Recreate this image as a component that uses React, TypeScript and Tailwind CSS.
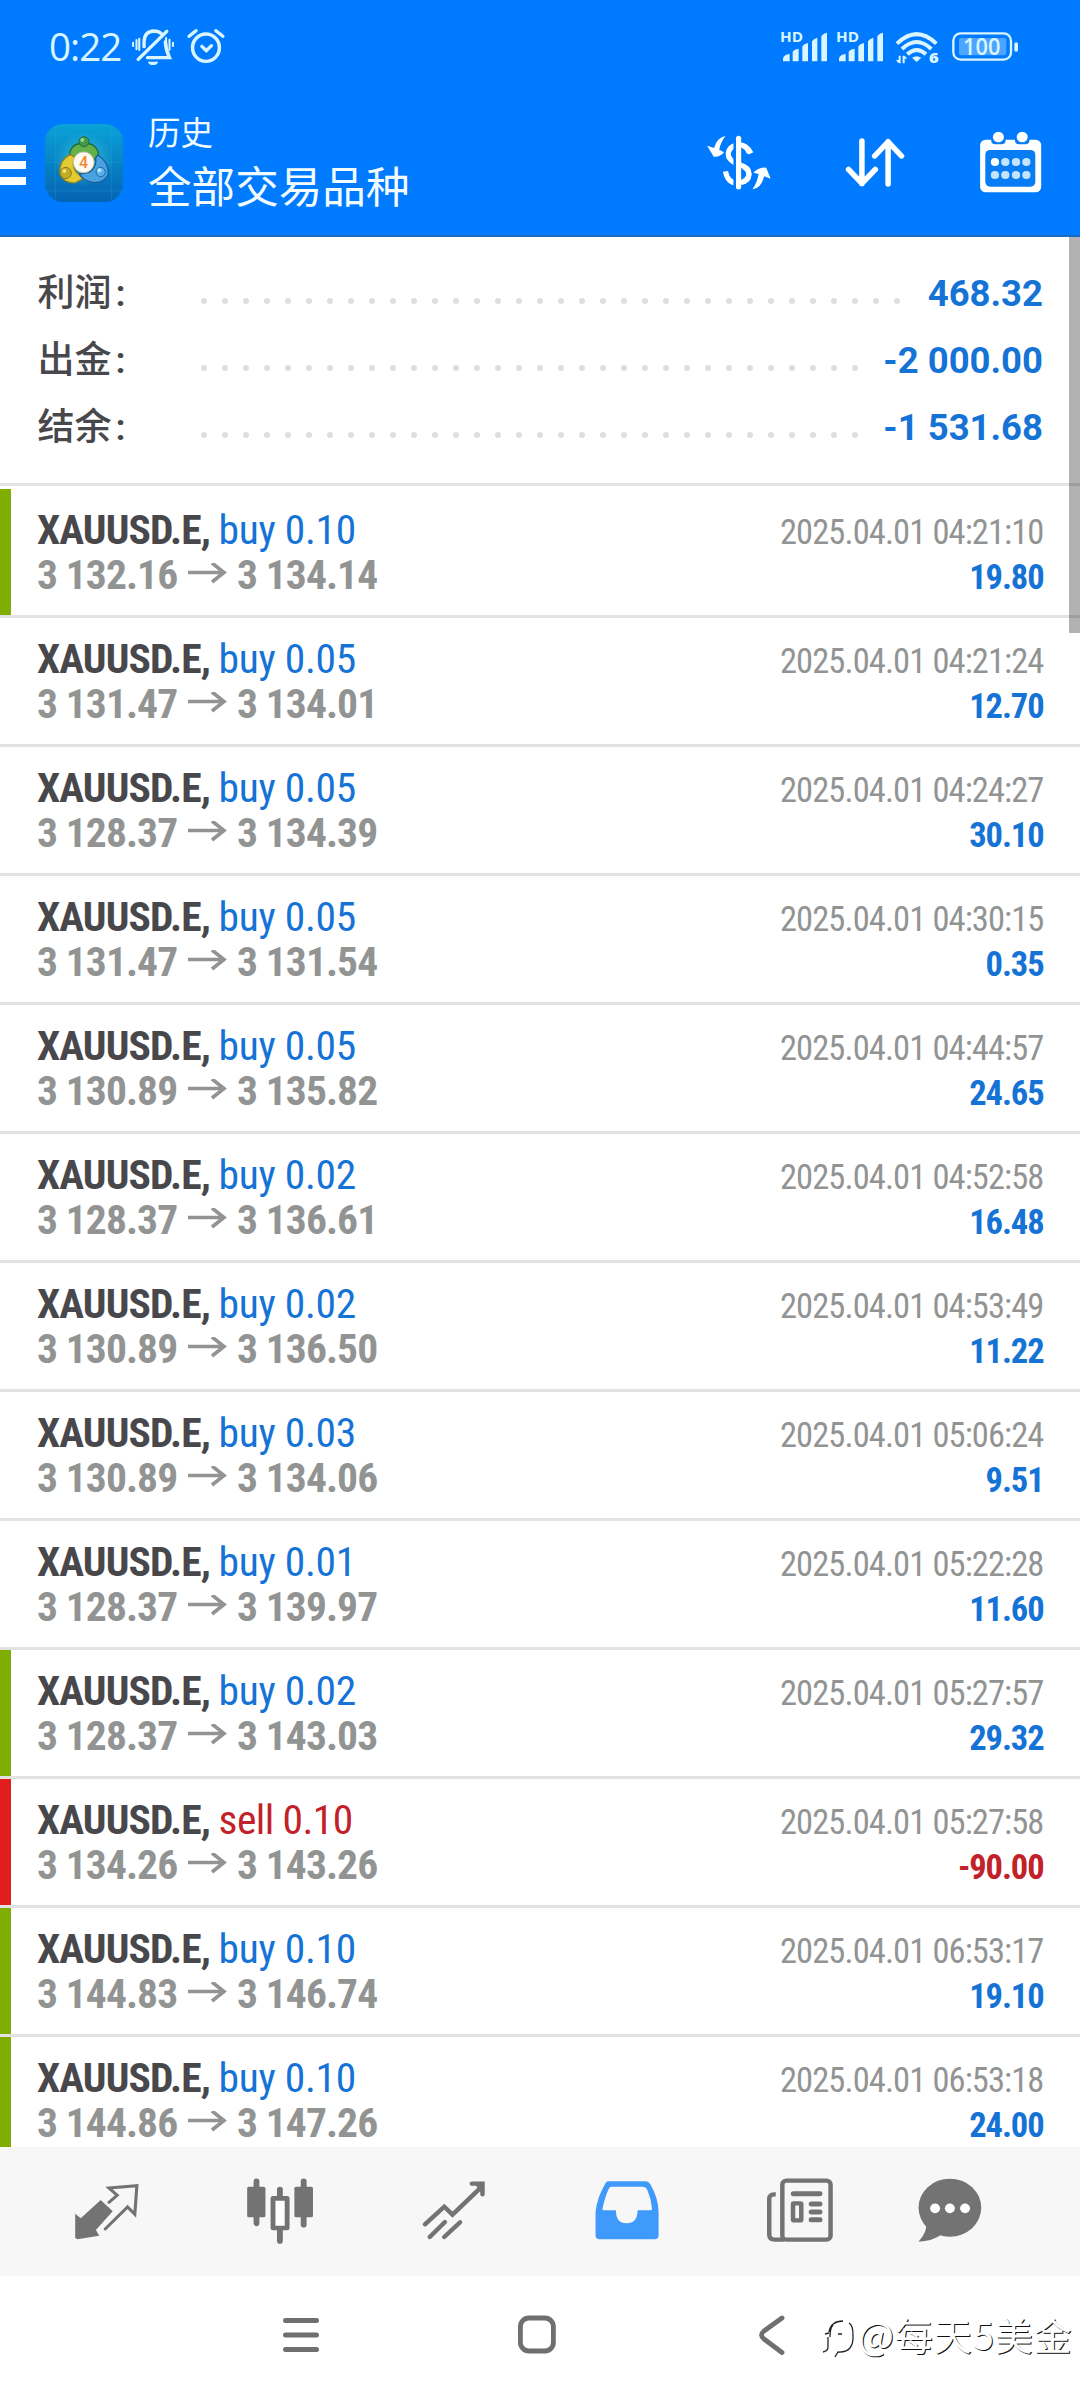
import type { ReactNode } from "react";

type Marker = "green" | "red" | "none";

interface Trade {
  side: "buy" | "sell";
  volume: string;
  open: string;
  close: string;
  time: string;
  profit: string;
  marker: Marker;
}

const trade = (
  side: "buy" | "sell",
  volume: string,
  open: string,
  close: string,
  time: string,
  profit: string,
  marker: Marker = "none",
): Trade => ({ side, volume, open, close, time, profit, marker });

const TRADES: Trade[] = [
  trade("buy", "0.10", "3 132.16", "3 134.14", "04:21:10", "19.80", "green"),
  trade("buy", "0.05", "3 131.47", "3 134.01", "04:21:24", "12.70"),
  trade("buy", "0.05", "3 128.37", "3 134.39", "04:24:27", "30.10"),
  trade("buy", "0.05", "3 131.47", "3 131.54", "04:30:15", "0.35"),
  trade("buy", "0.05", "3 130.89", "3 135.82", "04:44:57", "24.65"),
  trade("buy", "0.02", "3 128.37", "3 136.61", "04:52:58", "16.48"),
  trade("buy", "0.02", "3 130.89", "3 136.50", "04:53:49", "11.22"),
  trade("buy", "0.03", "3 130.89", "3 134.06", "05:06:24", "9.51"),
  trade("buy", "0.01", "3 128.37", "3 139.97", "05:22:28", "11.60"),
  trade("buy", "0.02", "3 128.37", "3 143.03", "05:27:57", "29.32", "green"),
  trade("sell", "0.10", "3 134.26", "3 143.26", "05:27:58", "-90.00", "red"),
  trade("buy", "0.10", "3 144.83", "3 146.74", "06:53:17", "19.10", "green"),
  trade("buy", "0.10", "3 144.86", "3 147.26", "06:53:18", "24.00", "green"),
];

const MARKER_CLASS: Record<Marker, string> = {
  green: "bg-[#80ae00]",
  red: "bg-[#e11d1d]",
  none: "bg-transparent",
};

function SignalGroup({ x }: { x: number }) {
  return (
    <g transform={`translate(${x} 0)`}>
      <text x="60" y="67" fontSize="41" fontWeight="700" fontFamily="Open Sans, sans-serif" textLength="69" lengthAdjust="spacingAndGlyphs">
        HD
      </text>
      <path d="M69 124v-8q2-12 20-14v22zM98 124V95q4-7 18-9v38zM127 124V79q4-7 17-10v55zM156 124V64q4-8 16-11v71zM184 124V49q4-8 17-11v86z" />
    </g>
  );
}

function StatusBar() {
  return (
    <div className="flex h-[94px] items-start pt-5 pl-[49px] text-[#d9f5ff]">
      <div className="w-[78px] font-['Open_Sans'] text-[38.5px] leading-[52px] tracking-[-1px] font-medium">
        <span>0:22</span>
      </div>
      <svg className="mt-[6px] ml-1 h-[42px] w-[44px]" viewBox="378 78 128 126" preserveAspectRatio="none" fill="none" stroke="currentColor" strokeLinecap="round">
        <path strokeWidth="10" d="M399 178 482 94M416 140v-16q2-30 28-31 14 0 22 8M478 125q1 25 12 48H426" />
        <path strokeWidth="6" d="M384 128v10M394 120v28M402 116v34M480 114v36M490 119v30M500 128v10" />
        <path fill="currentColor" stroke="none" d="M427 185h30q-3 10-15 10t-15-10z" />
      </svg>
      <svg className="mt-[6px] ml-[11px] h-[42px] w-[42px]" viewBox="540 78 122 126" preserveAspectRatio="none" fill="none" stroke="currentColor" strokeWidth="10" strokeLinecap="round">
        <ellipse cx="598" cy="143" rx="39" ry="41" />
        <path d="m549 109 20-17M647 109l-20-17" />
        <path d="m586 139 13 13 15-15" />
      </svg>
      <svg className="ml-auto h-[60px] w-[320px]" viewBox="0 0 960 180" fill="currentColor">
        <SignalGroup x={0} />
        <SignalGroup x={168} />
        <g fill="none" stroke="currentColor" strokeWidth="12">
          <path d="M411 71q59-57 118 0M426 87q44-42 88 0M442 103q28-26 56 0" />
        </g>
        <path d="M456 113q14-9 28 0l-14 13z" />
        <path d="M416 107h6v23h-4q-7-3-10-10h8zM428 130v-23h4q6 2 9 9h-7v14z" />
        <text x="507" y="130" fontSize="41" fontWeight="800" fontFamily="Open Sans, sans-serif" textLength="29" lengthAdjust="spacingAndGlyphs">
          6
        </text>
        <rect x="580" y="40" width="173" height="79" rx="22" fill="none" stroke="currentColor" strokeWidth="7" />
        <rect x="597" y="54" width="142" height="52" rx="6" opacity="0.35" />
        <text x="609" y="105" fontSize="68" fontWeight="600" fontFamily="Open Sans, sans-serif" textLength="112" lengthAdjust="spacingAndGlyphs">
          100
        </text>
        <rect x="763" y="67" width="11" height="28" rx="5" />
      </svg>
    </div>
  );
}

function AppLogo() {
  return (
    <svg className="h-[80px] w-[80px]" viewBox="42 40 240 240">
      <defs>
        <linearGradient id="tile" x1="0" y1="0" x2="0" y2="1">
          <stop offset="0" stopColor="#0aa2d8" />
          <stop offset="0.5" stopColor="#0783c4" />
          <stop offset="1" stopColor="#0563b4" />
        </linearGradient>
        <radialGradient id="glow">
          <stop offset="0" stopColor="#5fe0d8" stopOpacity="0.6" />
          <stop offset="1" stopColor="#5fe0d8" stopOpacity="0" />
        </radialGradient>
      </defs>
      <rect x="45" y="43" width="234" height="234" rx="54" fill="url(#tile)" />
      <path d="M46 75h232M46 159h232M46 244h232M76 50v220M244 50v220" stroke="#35b4e0" strokeOpacity="0.35" strokeWidth="2" />
      <ellipse cx="162" cy="150" rx="90" ry="80" fill="url(#glow)" />
      <g strokeWidth="4">
        <path d="M120 150q-8-48 42-50 48 2 44 50l-22-4q-20-28-44-2z" fill="#64b04a" stroke="#1f6d3a" />
        <path d="M122 135q-34 14-33 56 12 32 48 28l22-12-20-20q-16-22-4-44z" fill="#e4cb33" stroke="#8f8420" />
        <path d="M203 136q34 20 32 58-10 26-44 25-32-4-42-26l30-6q22-16 18-42z" fill="#4aa3df" stroke="#155f9c" />
      </g>
      <circle cx="162" cy="96" r="15" fill="#3f9a48" stroke="#216b39" strokeWidth="3" />
      <circle cx="107" cy="190" r="17" fill="#c2ad25" stroke="#817a23" strokeWidth="3" />
      <circle cx="212" cy="187" r="14" fill="#59b2ed" stroke="#1c6bab" strokeWidth="3" />
      <circle cx="157" cy="91" r="6" fill="#9ad58c" />
      <circle cx="103" cy="184" r="6" fill="#f2e574" />
      <circle cx="208" cy="182" r="6" fill="#bfe6ff" />
      <circle cx="161" cy="158" r="31" fill="#fffaf0" stroke="#c9cdb4" strokeWidth="3" />
      <text x="161" y="175" fontSize="48" fontWeight="500" fontFamily="Roboto, sans-serif" textAnchor="middle" fill="#ee8a3c">
        4
      </text>
    </svg>
  );
}

function Header() {
  return (
    <header className="h-[237px] border-b-2 border-[#1769c4] bg-[#007aff]">
      <StatusBar />
      <div className="flex h-[141px] items-start text-white">
        <div className="mt-[51px] flex w-[26px] flex-col gap-[8.5px]">
          <span className="h-[7.5px] bg-white" />
          <span className="h-[7.5px] bg-white" />
          <span className="h-[7.5px] bg-white" />
        </div>
        <div className="mt-[29px] ml-[18px]">
          <AppLogo />
        </div>
        <div className="mt-[15px] ml-6 flex flex-col font-['Noto_Sans_CJK_SC'] text-[#f2fcff]">
          <span className="text-[32.5px] leading-[44px]">历史</span>
          <span className="text-[43.6px] leading-[62px]">全部交易品种</span>
        </div>
        <div className="mt-[35px] mr-[34px] ml-auto flex items-center">
          <svg className="h-[66px] w-[76px]" viewBox="476 393 220 198" preserveAspectRatio="none" fill="none" stroke="#fff" strokeLinecap="round">
            <path strokeWidth="15" strokeLinecap="butt" d="M615 463q-12-25-36-25-28 2-30 28 0 18 28 30 32 11 32 29 0 24-34 28-28-2-34-36" />
            <path strokeWidth="26" stroke="#007aff" strokeLinecap="butt" d="M577 428v142" />
            <path strokeWidth="15" d="M579 418v146" />
            <path strokeWidth="15" strokeLinecap="butt" d="M582 437q20 0 28 25M582 497q27 8 27 27 0 20-25 27" />
            <path fill="#fff" stroke="none" d="M541 411q-24 4-33 36l-20-7 19 33q17 3 30-13l-14-8q4-22 18-41zM619 571q26-4 34-39l19 7-13-33q-22-2-37 15l15 4q-4 26-18 46z" />
          </svg>
          <svg className="ml-[65px] h-[66px] w-[62px]" viewBox="884 393 180 198" preserveAspectRatio="none" fill="none" stroke="#fff" strokeWidth="16" strokeLinecap="round" strokeLinejoin="round">
            <path d="M936 426v128M897 511l39 42 39-42M1012 555V428M973 471l39-43 39 43" />
          </svg>
          <svg className="ml-[70px] h-[68px] w-[70px]" viewBox="1265 388 203 204" preserveAspectRatio="none">
            <rect x="1277" y="420" width="177" height="158" rx="16" fill="#fff" />
            <rect x="1292" y="451" width="145" height="110" rx="14" fill="#087cf2" />
            <g fill="#087cf2">
              <path d="M1309 412h42v10q0 12-12 12h-18q-12 0-12-12zM1378 412h42v10q0 12-12 12h-18q-12 0-12-12z" />
            </g>
            <g fill="#fff">
              <circle cx="1330" cy="412" r="16" />
              <circle cx="1399" cy="412" r="16" />
              <circle cx="1320" cy="487" r="12" />
            </g>
            <g fill="#c3e4ff">
              <circle cx="1350" cy="487" r="12" />
              <circle cx="1381" cy="487" r="12" />
              <circle cx="1411" cy="487" r="12" />
              <circle cx="1320" cy="526" r="12" />
              <circle cx="1350" cy="526" r="12" />
              <circle cx="1381" cy="526" r="12" />
              <circle cx="1411" cy="526" r="12" />
            </g>
          </svg>
        </div>
      </div>
    </header>
  );
}

function SummaryRow({ label, value, dots }: { label: string; value: string; dots: number }) {
  return (
    <div className="flex h-[67px] items-center">
      <div className="w-[163px] font-[Roboto,'Noto_Sans_CJK_SC'] text-[37px] leading-[67px] font-medium text-[#48484c]">
        <span>{label}</span>
        <span className="ml-[4px] font-semibold">:</span>
      </div>
      <div className="mt-[14px] flex gap-[15px]">
        {Array.from({ length: dots }, (_, i) => (
          <span key={i} className="size-[6px] rounded-full bg-[#dedede]" />
        ))}
      </div>
      <span className="ml-auto text-[36.5px] leading-[67px] font-bold text-[#1673d6]">{value}</span>
    </div>
  );
}

function Summary() {
  return (
    <section className="h-[249px] shrink-0 border-b-[3px] border-[#e3e3e3] pt-[23px] pr-[37px] pl-[37.5px]">
      <SummaryRow label="利润" value="468.32" dots={34} />
      <SummaryRow label="出金" value="-2 000.00" dots={32} />
      <SummaryRow label="结余" value="-1 531.68" dots={32} />
    </section>
  );
}

function TradeRow({ item }: { item: Trade }) {
  const sideStyle = item.side === "buy" ? "tracking-[-0.3px] text-[#1673d6]" : "tracking-[-0.6px] text-[#c22129]";
  const profitColor = item.profit.startsWith("-") ? "text-[#c22129]" : "text-[#1673d6]";
  return (
    <div className="flex h-[129px] shrink-0 border-b-[3px] border-[#e2e2e2]">
      <span className={`w-[11px] ${MARKER_CLASS[item.marker]}`} />
      <div className="flex-1 pt-[18px] pr-[36.5px] pl-[26px] font-['Roboto_Condensed'] leading-[45px]">
        <div className="flex h-[45px] items-baseline justify-between">
          <div className="text-[41.5px]">
            <span className="font-bold tracking-[-0.9px] text-[#48484c]">XAUUSD.E, </span>
            <span className={sideStyle}>
              {item.side} {item.volume}
            </span>
          </div>
          <span className="text-[34.5px] tracking-[-0.9px] text-[#929494]">2025.04.01 {item.time}</span>
        </div>
        <div className="flex h-[45px] items-baseline justify-between">
          <div className="flex items-baseline text-[41.5px] font-bold tracking-[-0.9px] text-[#929494]">
            <span className="w-[150px]">{item.open}</span>
            <svg className="h-[26px] w-[40px]" viewBox="0 0 40 26" fill="none" stroke="currentColor" strokeWidth="3.6">
              <path d="M1 9.5h35M25 0l12 9.5L25 19" />
            </svg>
            <span className="ml-[10px]">{item.close}</span>
          </div>
          <span className={`text-[34.5px] font-bold tracking-[-1.1px] ${profitColor}`}>{item.profit}</span>
        </div>
      </div>
    </div>
  );
}

function NavIcon({ viewBox, last = false, children }: { viewBox: string; last?: boolean; children: ReactNode }) {
  return (
    <div className={`flex justify-center ${last ? "w-[126px]" : "w-[173.4px]"}`}>
      <svg className="h-[73.3px] w-[75.8px]" viewBox={viewBox} preserveAspectRatio="none" fill="none" stroke="#737373">
        {children}
      </svg>
    </div>
  );
}

function TabBar() {
  return (
    <nav className="flex h-[129px] items-center bg-[#f7f7f7] pl-[20px]">
      <NavIcon viewBox="202 134 220 220">
        <path fill="#737373" stroke="none" d="M220 250l16 14 58-55 35 34-49 56 10 17-64 11-6-5z" />
        <path strokeWidth="9" d="M318 216l24-21-24-22 81-7-6 86-21-22-65 66" strokeLinecap="round" />
      </NavIcon>
      <NavIcon viewBox="703 134 220 220">
        <g fill="#737373" stroke="none">
          <rect x="718" y="169" width="53" height="92" rx="5" />
          <rect x="855" y="169" width="54" height="92" rx="5" />
        </g>
        <path strokeWidth="17" strokeLinecap="round" d="M745 153v126M882 153v130M813 178v24M813 298v34" />
        <rect x="793" y="204" width="41" height="89" fill="#fff" strokeWidth="14" strokeLinejoin="round" />
      </NavIcon>
      <NavIcon viewBox="1206 134 220 220">
        <path strokeWidth="13" strokeLinecap="round" d="M1232 282l56-53 24 24 82-81M1246 320l44-45M1288 320l46-44" />
        <path strokeWidth="13" strokeLinecap="round" d="M1368 160h31v32" />
        <path fill="#737373" stroke="none" d="M1378 162h24v22l-12-2z" />
      </NavIcon>
      <NavIcon viewBox="143 134 220 220">
        <path
          fill="#409afb"
          stroke="none"
          fillRule="evenodd"
          d="M200 153H308q8 0 13 9 24 43 24 83V315q0 12-12 12H174q-12 0-12-12V245q3-40 28-85 3-7 10-7zM208 169H300q8 0 12 9 12 28 14 57 0 5-6 5H284Q284 279 252 279 221 279 221 240H186q-5 0-4-5 8-36 18-59 3-7 8-7z"
        />
      </NavIcon>
      <NavIcon viewBox="650 134 220 220">
        <rect x="709" y="151" width="140" height="177" rx="12" strokeWidth="13" />
        <path strokeWidth="13" d="M690 192q-19-1-19 14v106q0 16 16 16h28" />
        <path strokeWidth="15" strokeLinecap="round" d="M741 190h77M793 221h25M793 245h25M793 268h25" />
        <rect x="740" y="219" width="24" height="51" rx="2" strokeWidth="13" />
      </NavIcon>
      <NavIcon viewBox="1083 134 220 220" last>
        <g fill="#737373" stroke="none">
          <ellipse cx="1193" cy="232" rx="91" ry="87" />
          <path d="M1123 270q8 32-21 64 38 0 68-22z" />
        </g>
        <g fill="#fff" stroke="none">
          <circle cx="1150" cy="234" r="14.5" />
          <circle cx="1193" cy="234" r="14.5" />
          <circle cx="1237" cy="234" r="14.5" />
        </g>
      </NavIcon>
    </nav>
  );
}

function SystemBar() {
  return (
    <div className="relative flex h-[124px] items-start bg-white pt-[34px] pl-[183px]">
      <div className="flex w-[236px] justify-center">
        <svg className="size-[50px]" viewBox="0 0 50 50" stroke="#6f6f6f" strokeWidth="5" strokeLinecap="round">
          <path d="M9.500 10.500h31M9.500 25h31M9.500 39.500h31" />
        </svg>
      </div>
      <div className="flex w-[236px] justify-center">
        <svg className="size-[50px]" viewBox="0 0 50 50" fill="none" stroke="#6f6f6f" strokeWidth="4.800">
          <rect x="8.400" y="8" width="33" height="33" rx="8.500" />
        </svg>
      </div>
      <div className="flex w-[236px] justify-center">
        <svg className="size-[50px]" viewBox="0 0 50 50" fill="none" stroke="#6f6f6f" strokeWidth="4.800" strokeLinecap="round">
          <path d="M34 8 16 21q-5 4 0 8l18 13.500" />
        </svg>
      </div>
      <div className="absolute top-[33px] left-[820px] flex items-center whitespace-nowrap">
        <svg className="mt-[6px] h-[44px] w-[38px]" viewBox="0 0 38 44" fill="none" stroke="#222" strokeWidth="1.300">
          <path d="M3 37q5-1 5-5V22M5 19l4-1M9 17q2-11 14-11M18 19h4M29 8q4 2 4 12 1 18-15 17l-3 5M10 22q0-9 3-12" />
        </svg>
        <span className="font-['Noto_Sans_CJK_SC'] text-[38px] leading-[50px] tracking-[0.9px] text-white [text-shadow:1px_1px_0.5px_#111]">
          @每天5美金
        </span>
      </div>
    </div>
  );
}

export default function App() {
  return (
    <div className="flex h-[2400px] w-[1080px] flex-col overflow-hidden bg-white font-[Roboto,'Noto_Sans_CJK_SC',sans-serif]">
      <Header />
      <main className="relative flex h-[1910px] flex-col overflow-hidden">
        <Summary />
        <div className="flex flex-col pt-[3px]">
          {TRADES.map((item) => (
            <TradeRow key={item.time} item={item} />
          ))}
        </div>
        <span className="absolute top-0 right-0 h-[396px] w-[11px] bg-black/30" />
      </main>
      <TabBar />
      <SystemBar />
    </div>
  );
}
